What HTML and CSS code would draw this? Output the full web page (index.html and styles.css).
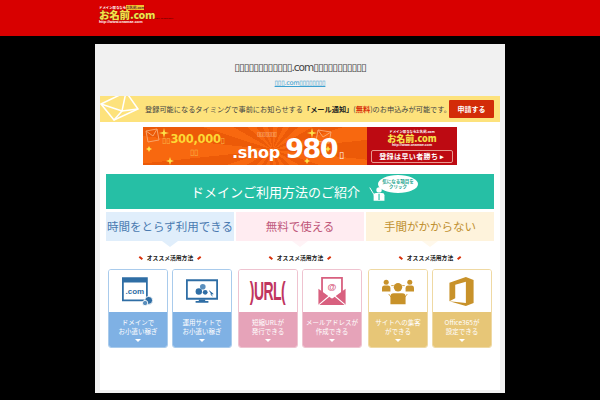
FILE: index.html
```html
<!DOCTYPE html>
<html lang="ja">
<head>
<meta charset="utf-8">
<title>お名前.com</title>
<link rel="stylesheet" href="styles.css">
</head>
<body>
<header class="top">
  <div class="logo">
    <div class="logo-small">ドメイン取るなら<span>お名前.com</span></div>
    <div class="logo-main">お名前.com</div>
    <div class="logo-url">http://www.onamae.com</div>
  </div>
  <div class="logo-tail">GMO INTERNET</div>
</header>
<main class="panel">
  <div class="intro">
    <h1 class="title">▯▯▯▯▯▯▯▯▯▯▯▯.com▯▯▯▯▯▯▯▯▯▯▯</h1>
    <a class="sub" href="#">▯▯▯.com▯▯▯▯▯▯▯▯</a>
  </div>
  <div class="body">
    <div class="notice">
      <svg class="notice-env" viewBox="0 0 42 26"><path d="M1 8 26-4 38 13 14 24Z" fill="none" stroke="#fff" stroke-width="1.500"/><path d="M1 8 22 15 26-4M14 24 22 15 38 13" fill="none" stroke="#fff" stroke-width="1.500"/></svg>
      <p class="notice-text">登録可能になるタイミングで事前にお知らせする<b>「メール通知」</b>(<em>無料</em>)のお申込みが可能です。</p>
      <span class="notice-btn">申請する</span>
    </div>
    <div class="banner">
      <div class="banner-l">
        <svg class="sparkle" viewBox="0 0 224 38"><g fill="#fde24a"><path d="M21 1 22 5 26 6 22 7 21 11 20 7 16 6 20 5Z"/><path d="M6 19 7 21 9 22 7 23 6 25 5 23 3 22 5 21Z"/><path d="M27 30 28 33 31 34 28 35 27 38 26 35 23 34 26 33Z"/><path d="M169 1 170 5 174 6 170 7 169 11 168 7 164 6 168 5Z"/><path d="M185 19 186 21 188 22 186 23 185 25 184 23 182 22 184 21Z"/><path d="M164 31 165 33 167 34 165 35 164 37 163 35 161 34 163 33Z"/></g><g fill="none" stroke="#f9a46a" stroke-width="1"><path d="M3 4 14 2 16 13 5 15ZM3 4 10 9 14 2"/><path d="M175 3 188 5 186 16 173 14ZM175 3 180 10 188 5"/></g></svg>
        <div class="promo"><span class="promo-n"><i>▯▯</i>300,000<i>▯</i></span><i class="promo-s">▯▯</i></div>
        <div class="price">
          <span class="price-note">▯▯▯▯▯▯▯</span>
          <span class="price-main">.shop <b>980</b><i>▯</i></span>
        </div>
      </div>
      <div class="banner-r">
        <div class="mini-small">ドメイン取るならお名前.com</div>
        <div class="mini-main">お名前.com</div>
        <div class="mini-url">http://www.onamae.com</div>
        <div class="mini-btn">登録は早い者勝ち ▸</div>
      </div>
    </div>
    <section class="guide">
      <div class="guide-head">
        <span>ドメインご利用方法のご紹介</span>
        <div class="click">
          <svg class="click-person" viewBox="0 0 22 20"><path d="M1 3 7 13" stroke="#fff" stroke-width="1.200"/><circle cx="13" cy="6" r="3.500" fill="#fff"/><path d="M6 20V13q0-3 3-3h8q3 0 3 3v7Z" fill="#fff"/><path d="M13 11v8" stroke="#26bfa5" stroke-width="1.500"/></svg>
          <div class="bubble">気になる項目を<br>クリック</div>
        </div>
      </div>
      <div class="cols">
        <div class="col">
          <div class="col-head col-blue">時間をとらず利用できる</div>
          <div class="rec">オススメ活用方法</div>
          <div class="tiles">
            <a class="tile t-blue"><div class="pic"><svg viewBox="0 0 36 32"><path d="M1 1h27v25H1Z" fill="#fff" stroke="#2f6ea5" stroke-width="2"/><path d="M1 1h27v5H1Z" fill="#2f6ea5"/><text x="14.500" y="19" class="svg-com">.com</text><circle cx="30" cy="26" r="4.500" fill="#2f6ea5" stroke="#fff"/><circle cx="26" cy="29" r="3" fill="#5a8fbd" stroke="#fff"/></svg></div><div class="cap">ドメインで<br>お小遣い稼ぎ<b class="tri"></b></div></a>
            <a class="tile t-blue"><div class="pic"><svg viewBox="0 0 40 30"><path d="M1 1h38v23H1Z" fill="#fff" stroke="#2f6ea5" stroke-width="2.500"/><path d="M16 25h8v2h4v2H12v-2h4Z" fill="#2f6ea5"/><circle cx="16" cy="15" r="4" fill="#2f6ea5"/><circle cx="21" cy="9" r="3.500" fill="#5a8fbd"/><circle cx="24" cy="16" r="3" fill="#2f6ea5"/><path d="M29 14 34 18 31 18 33 21" fill="#2f6ea5" stroke="#2f6ea5"/></svg></div><div class="cap">運用サイトで<br>お小遣い稼ぎ<b class="tri"></b></div></a>
          </div>
        </div>
        <div class="col">
          <div class="col-head col-pink">無料で使える</div>
          <div class="rec">オススメ活用方法</div>
          <div class="tiles">
            <a class="tile t-pink"><div class="pic"><span class="url">)URL(</span></div><div class="cap">短縮URLが<br>発行できる<b class="tri"></b></div></a>
            <a class="tile t-pink"><div class="pic"><svg viewBox="0 0 32 32"><path d="M5 1h22v24H5Z" fill="#fff" stroke="#d8607f" stroke-width="2"/><text x="16" y="14" class="svg-at">@</text><path d="M1 13 16 24 31 13V31H1Z" fill="#d8607f"/><path d="M1 31 13 21M31 31 19 21" stroke="#fff" stroke-width="1.200"/></svg></div><div class="cap">メールアドレスが<br>作成できる<b class="tri"></b></div></a>
          </div>
        </div>
        <div class="col">
          <div class="col-head col-gold">手間がかからない</div>
          <div class="rec">オススメ活用方法</div>
          <div class="tiles">
            <a class="tile t-gold"><div class="pic"><svg viewBox="0 0 38 30"><g fill="#c8922a"><circle cx="5" cy="4" r="3"/><path d="M0 15V11q0-3 3-3h4q3 0 3 3v4Z"/><circle cx="33" cy="4" r="3"/><path d="M28 15V11q0-3 3-3h4q3 0 3 3v4Z"/><circle cx="19" cy="10" r="5"/><path d="M10 30V21q0-4 4-4h10q4 0 4 4v9Z"/></g><path d="M11 8h3M24 8h3M8 18l3 4M30 18l-3 4" stroke="#c8922a"/></svg></div><div class="cap">サイトへの集客<br>ができる<b class="tri"></b></div></a>
            <a class="tile t-gold"><div class="pic"><svg viewBox="0 0 26 30"><path d="M0 6 17 0 25 3V27L17 30 0 25 17 27V5L6 8V22L0 25Z" fill="#c8922a"/></svg></div><div class="cap">Office365が<br>設定できる<b class="tri"></b></div></a>
          </div>
        </div>
      </div>
    </section>
  </div>
</main>
</body>
</html>
```
FILE: styles.css
```css
* { box-sizing: border-box; }
html, body { margin: 0; height: 400px; overflow: hidden; }
body { background: #000; font-family: "Noto Sans CJK JP", "Noto Sans", sans-serif; color: #333; }
i, em { font-style: normal; }

.top { height: 36px; background: #d80000; padding: 6px 0 0 99px; display: flex; align-items: flex-start; }
.logo { width: 54px; display: flex; flex-direction: column; }
.logo-small { font-size: 3.400px; line-height: 4px; color: #fff; font-weight: 700; white-space: nowrap; }
.logo-small span { background: #f2c230; color: #633; }
.logo-main { font-size: 10.500px; line-height: 10px; height: 10px; font-weight: 900; color: #f7e04a; text-shadow: 0 0 1px #321; white-space: nowrap; letter-spacing: -.2px; }
.logo-url { font: 700 3.800px/4px "Liberation Sans", sans-serif; color: #fff; white-space: nowrap; }
.logo-tail { font: 700 2.500px/3px "Liberation Sans", sans-serif; color: #600; margin: 11px 0 0 1px; white-space: nowrap; }

.panel { width: 410px; height: 349px; margin: 8px auto 0; background: #f1f1f1; padding: 0 5px 3px; display: flex; flex-direction: column; }
.intro { height: 52px; padding-top: 16px; display: flex; flex-direction: column; align-items: center; }
.title { margin: 0; font: 400 10.500px/14px "DejaVu Sans", sans-serif; color: #444; letter-spacing: -1px; white-space: nowrap; }
.sub { margin-top: 5px; font: 400 6.500px/9px "DejaVu Sans", sans-serif; color: #3aa0d0; letter-spacing: -.300px; text-decoration: underline; }

.body { flex: 1; background: #fff; display: flex; flex-direction: column; }
.notice { height: 26px; background: #fde27c; display: flex; align-items: center; padding-right: 6px; position: relative; overflow: hidden; }
.notice-env { position: absolute; left: 0; top: 0; width: 42px; height: 26px; }
.notice-text { margin: 0 0 0 45px; flex: 1; min-width: 0; font-size: 7.200px; line-height: 10px; color: #444; white-space: nowrap; }
.notice-text b { color: #222; }
.notice-text em { color: #d8300a; font-weight: 700; }
.notice-btn { flex: none; width: 45px; height: 18px; border-radius: 1px; background: #d32c08; color: #fff; font-size: 7px; font-weight: 700; line-height: 18px; text-align: center; }

.banner { width: 314px; height: 38px; margin: 5px auto 0; display: flex; }
.banner-l { width: 224px; display: flex; padding-left: 19px; position: relative; background: repeating-conic-gradient(from 0deg at 58% 60%, #f8680f 0 12deg, #ec5a08 12deg 24deg); }
.sparkle { position: absolute; left: 0; top: 0; width: 224px; height: 38px; }
.promo { width: 63px; padding-top: 6px; display: flex; flex-direction: column; align-items: center; position: relative; }
.promo-n { font: 700 11.500px/13px "DejaVu Sans", sans-serif; color: #fdd835; letter-spacing: -.300px; white-space: nowrap; }
.promo-n i, .promo-s { font-size: 8px; color: #f9b54a; }
.promo-s { line-height: 10px; }
.price { margin-left: 7px; display: flex; flex-direction: column; align-items: flex-start; width: 125px; padding-top: 3px; position: relative; }
.price-note { font: 6px/7px "DejaVu Sans", sans-serif; color: #fbc9a0; margin-left: 25px; letter-spacing: -.5px; }
.price-main { font: 700 16px/24px "DejaVu Sans", sans-serif; color: #fff; white-space: nowrap; letter-spacing: -.3px; }
.price-main b { font-size: 27px; line-height: 24px; letter-spacing: -1.500px; }
.price-main i { font-size: 9px; font-weight: 400; margin-left: 2px; }
.banner-r { width: 90px; background: #bd0a12; display: flex; flex-direction: column; align-items: center; padding-top: 3px; }
.mini-small { font-size: 3.400px; line-height: 4px; color: #fff; font-weight: 700; white-space: nowrap; }
.mini-main { font-size: 9px; line-height: 9px; height: 9px; font-weight: 900; color: #f7e04a; white-space: nowrap; }
.mini-url { font: 700 3.500px/4px "Liberation Sans", sans-serif; color: #fff; }
.mini-btn { width: 82px; height: 13px; margin-top: 3px; border: 1px solid #e89a90; border-radius: 2px; font-size: 7px; line-height: 11px; font-weight: 700; color: #fff; text-align: center; letter-spacing: .4px; white-space: nowrap; }

.guide { margin: 9px 6px 0; }
.guide-head { height: 35px; background: #26bfa5; color: #fff; font-size: 13px; line-height: 35px; padding-left: 85px; display: flex; }
.click { position: relative; width: 60px; margin-left: 9px; }
.click-person { position: absolute; left: 0; top: 11px; width: 17px; height: 16px; }
.bubble { position: absolute; left: 9px; top: 1px; width: 40px; height: 18px; border-radius: 50%; background: #fff; color: #26a58f; font-size: 4.500px; line-height: 5.500px; font-weight: 700; text-align: center; padding-top: 3.500px; white-space: nowrap; }

.cols { display: flex; justify-content: space-between; margin-top: 3px; }
.col { width: 128px; display: flex; flex-direction: column; }
.col-head { height: 29px; font-size: 11.500px; font-weight: 400; line-height: 29px; text-align: center; position: relative; white-space: nowrap; }
.col-head::after { content: ""; position: absolute; left: 50%; top: 100%; margin-left: -8px; border: 8px solid transparent; border-bottom: 0; border-top-width: 6px; border-top-color: inherit; }
.col-blue { background: #e0eefb; color: #4a7ab0; border-top-color: #e0eefb; }
.col-pink { background: #ffecf1; color: #c0587a; border-top-color: #fff3f6; }
.col-gold { background: #fef3dc; color: #c09030; border-top-color: #fff8ea; }
.rec { margin-top: 13px; height: 8px; font-size: 5.800px; line-height: 8px; font-weight: 700; color: #222; text-align: center; white-space: nowrap; display: flex; align-items: center; justify-content: center; gap: 4px; }
.rec::before, .rec::after { content: ""; width: 4px; height: 1.500px; background: #d8300a; }
.rec::before { transform: rotate(40deg); }
.rec::after { transform: rotate(-40deg); }
.tiles { display: flex; justify-content: space-between; margin-top: 7px; padding: 0 2px; }
.tile { width: 60px; height: 79px; border: 1px solid; border-radius: 3px; display: flex; flex-direction: column; overflow: hidden; }
.pic { height: 42px; background: #fff; display: flex; align-items: center; justify-content: center; }
.pic svg { width: 32px; height: 29px; }
.cap { flex: 1; color: #fff; font-size: 6.500px; line-height: 9px; text-align: center; padding-top: 6px; white-space: nowrap; position: relative; }
.tri { position: absolute; left: 50%; bottom: 5px; margin-left: -3px; border: 3px solid transparent; border-bottom: 0; border-top-color: #fff; }
.t-blue { border-color: #a9cbec; }
.t-blue .cap { background: #7fb1e4; }
.t-pink { border-color: #efc3d0; }
.t-pink .cap { background: #e6a3b9; }
.t-gold { border-color: #efd9a3; }
.t-gold .cap { background: #e7c677; }
.svg-com { font: 700 9px "Liberation Sans", sans-serif; fill: #2f6ea5; text-anchor: middle; }
.svg-at { font: 700 10px "Liberation Sans", sans-serif; fill: #d8607f; text-anchor: middle; }
.url { font: 700 25px/1 "Liberation Sans", sans-serif; color: #c0355f; transform: scaleX(.56); letter-spacing: -1px; white-space: nowrap; }
```
